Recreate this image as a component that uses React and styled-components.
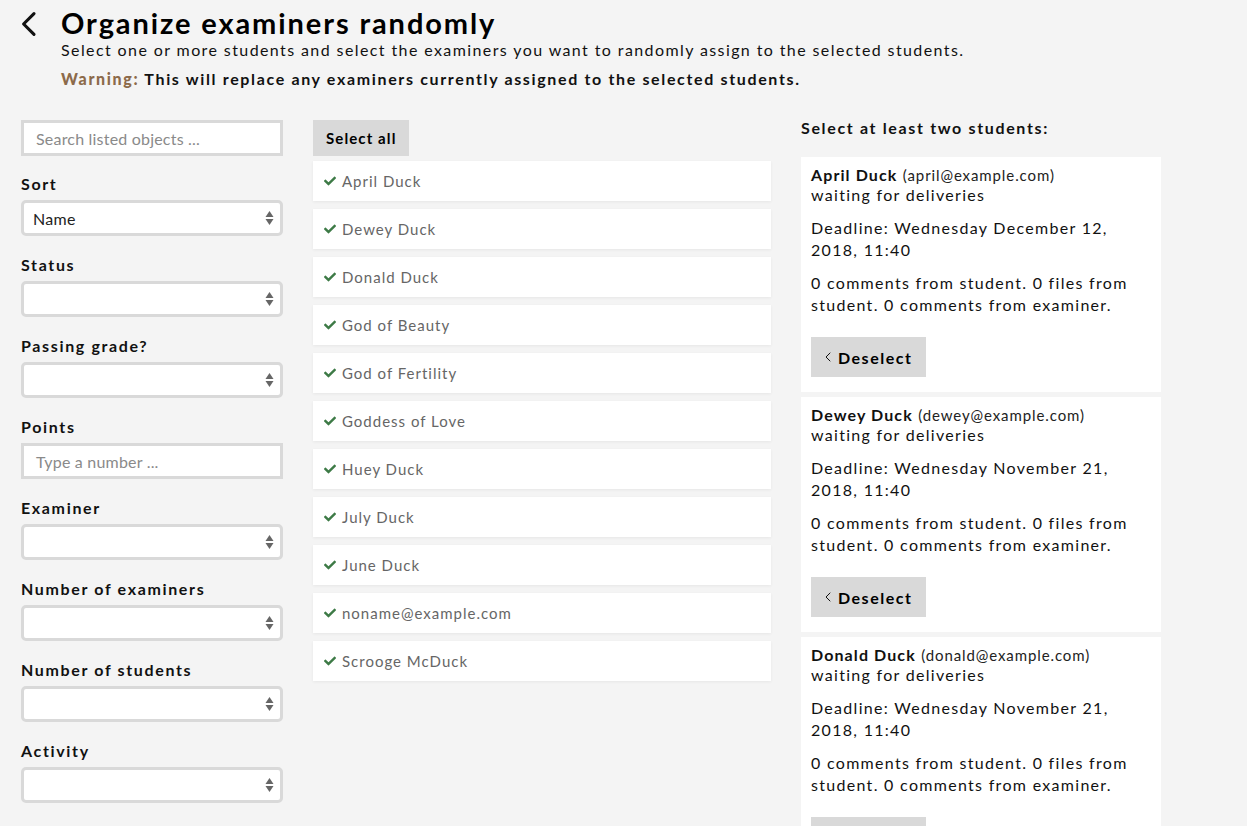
import React from 'react';
import styled, { createGlobalStyle } from 'styled-components';
import { FaCheck } from 'react-icons/fa';

const GlobalStyle = createGlobalStyle`
  html, body {
    margin: 0;
    padding: 0;
    background: #f4f4f4;
  }
  body {
    font-family: Lato, 'Open Sans', sans-serif;
    color: #111;
  }
  * {
    box-sizing: border-box;
  }
`;

const Page = styled.div`
  padding: 0 0 0 21px;
  min-height: 826px;
`;

const Header = styled.div`
  display: flex;
  align-items: flex-start;
  padding-top: 6px;
`;

const BackButton = styled.div`
  width: 40px;
  height: 34px;
  display: flex;
  align-items: center;
  padding-top: 2px;
  svg {
    display: block;
  }
`;

const TitleBlock = styled.div`
  display: flex;
  flex-direction: column;
`;

const Title = styled.h1`
  margin: 0;
  font-size: 29px;
  line-height: 34px;
  font-weight: 700;
  letter-spacing: 1.9px;
  color: #000;
`;

const Lead = styled.p`
  margin: 0;
  font-size: 16px;
  line-height: 20px;
  letter-spacing: 1.4px;
  color: #111;
`;

const Warning = styled.p`
  margin: 9px 0 0;
  font-size: 16px;
  line-height: 20px;
  font-weight: 700;
  letter-spacing: 1.65px;
  color: #111;
  strong {
    color: #8c6a4a;
  }
`;

const Columns = styled.div`
  display: flex;
  align-items: flex-start;
  gap: 30px;
  margin-top: 31px;
`;

const Sidebar = styled.div`
  width: 262px;
  display: flex;
  flex-direction: column;
`;

const TextInput = styled.div`
  height: 36px;
  border: 3px solid #d9d9d9;
  background: #fff;
  display: flex;
  align-items: center;
  padding: 0 12px;
  font-size: 16px;
  letter-spacing: 0.2px;
  color: #8a8a8a;
`;

const FieldLabel = styled.div`
  margin-top: ${p => (p.$first ? 18 : 19)}px;
  margin-bottom: 6px;
  font-size: 16px;
  line-height: 20px;
  font-weight: 700;
  letter-spacing: 1.65px;
  color: #111;
`;

const SelectBox = styled.div`
  height: 36px;
  border: 3px solid #d9d9d9;
  border-radius: 5px;
  background: #fff;
  display: flex;
  align-items: center;
  justify-content: space-between;
  padding: 0 6px 0 9px;
  font-size: 16px;
  letter-spacing: 0.3px;
  color: #222;
`;

const Arrows = styled.svg`
  display: block;
`;

const ListColumn = styled.div`
  width: 458px;
  display: flex;
  flex-direction: column;
  gap: 8px;
`;

const GrayButton = styled.div`
  display: inline-flex;
  align-items: center;
  align-self: flex-start;
  gap: 7px;
  height: ${p => p.$h}px;
  padding: 0 ${p => p.$px}px;
  background: #d9d9d9;
  font-size: ${p => p.$fs}px;
  font-weight: 700;
  letter-spacing: ${p => p.$ls}px;
  color: #000;
`;

const ListStack = styled.div`
  display: flex;
  flex-direction: column;
  gap: 8px;
  margin-top: -3px;
`;

const ListItem = styled.div`
  height: 40px;
  background: #fff;
  box-shadow: 0 1px 3px rgba(0, 0, 0, 0.06);
  display: flex;
  align-items: center;
  gap: 6px;
  padding: 0 11px;
  font-size: 15px;
  letter-spacing: 1px;
  color: #666;
  svg {
    color: #3d7a46;
    flex: none;
  }
`;

const DetailColumn = styled.div`
  width: 360px;
  display: flex;
  flex-direction: column;
`;

const DetailHeading = styled.div`
  height: 37px;
  font-size: 16px;
  line-height: 16px;
  font-weight: 700;
  letter-spacing: 1.65px;
  color: #111;
`;

const CardStack = styled.div`
  display: flex;
  flex-direction: column;
  gap: 5px;
`;

const Card = styled.div`
  background: #fff;
  padding: 8px 10px 15px;
  color: #111;
`;

const CardHead = styled.div`
  font-size: 16px;
  line-height: 20px;
  letter-spacing: 1.3px;
  b {
    font-weight: 700;
    letter-spacing: 1.1px;
  }
  span {
    font-size: 15px;
    letter-spacing: 0.9px;
    color: #222;
  }
`;

const CardText = styled.p`
  margin: ${p => p.$mt}px 0 0;
  font-size: 16px;
  line-height: 22px;
  letter-spacing: 1.3px;
  color: #111;
`;

const ButtonRow = styled.div`
  margin-top: 21px;
  display: flex;
`;

const filters = [
  { label: 'Sort', value: 'Name' },
  { label: 'Status' },
  { label: 'Passing grade?' },
  { label: 'Points', input: 'Type a number ...' },
  { label: 'Examiner' },
  { label: 'Number of examiners' },
  { label: 'Number of students' },
  { label: 'Activity' },
];

const students = [
  'April Duck',
  'Dewey Duck',
  'Donald Duck',
  'God of Beauty',
  'God of Fertility',
  'Goddess of Love',
  'Huey Duck',
  'July Duck',
  'June Duck',
  'noname@example.com',
  'Scrooge McDuck',
];

const selected = [
  { name: 'April Duck', email: 'april@example.com', deadline: 'Wednesday December 12, 2018, 11:40' },
  { name: 'Dewey Duck', email: 'dewey@example.com', deadline: 'Wednesday November 21, 2018, 11:40' },
  { name: 'Donald Duck', email: 'donald@example.com', deadline: 'Wednesday November 21, 2018, 11:40' },
];

function SelectArrows() {
  return (
    <Arrows width="9" height="16" viewBox="0 0 9 16">
      <path d="M4.5 1 L8.5 7 L0.5 7 Z" fill="#666" />
      <path d="M4.5 15 L8.5 9 L0.5 9 Z" fill="#666" />
    </Arrows>
  );
}

function Chevron({ size = 20, stroke = 3 }) {
  return (
    <svg width={size * 0.6} height={size} viewBox="0 0 12 20" fill="none">
      <path d="M10 2 L2 10 L10 18" stroke="#111" strokeWidth={stroke} strokeLinecap="round" strokeLinejoin="round" />
    </svg>
  );
}

export default function App() {
  return (
    <Page>
      <GlobalStyle />
      <Header>
        <BackButton>
          <Chevron size={26} stroke={2.4} />
        </BackButton>
        <TitleBlock>
          <Title>Organize examiners randomly</Title>
          <Lead>
            Select one or more students and select the examiners you want to randomly assign to the selected students.
          </Lead>
          <Warning>
            <strong>Warning:</strong> This will replace any examiners currently assigned to the selected students.
          </Warning>
        </TitleBlock>
      </Header>

      <Columns>
        <Sidebar>
          <TextInput>Search listed objects ...</TextInput>
          {filters.map((f, i) => (
            <React.Fragment key={f.label}>
              <FieldLabel $first={i === 0}>{f.label}</FieldLabel>
              {f.input ? (
                <TextInput>{f.input}</TextInput>
              ) : (
                <SelectBox>
                  <span>{f.value || ''}</span>
                  <SelectArrows />
                </SelectBox>
              )}
            </React.Fragment>
          ))}
        </Sidebar>

        <ListColumn>
          <GrayButton $h={36} $px={13} $fs={15} $ls={1.1}>
            Select all
          </GrayButton>
          <ListStack>
            {students.map(name => (
              <ListItem key={name}>
                <FaCheck size={12} />
                {name}
              </ListItem>
            ))}
          </ListStack>
        </ListColumn>

        <DetailColumn>
          <DetailHeading>Select at least two students:</DetailHeading>
          <CardStack>
            {selected.map(s => (
              <Card key={s.name}>
                <CardHead>
                  <b>{s.name}</b> <span>({s.email})</span>
                  <br />
                  waiting for deliveries
                </CardHead>
                <CardText $mt={12}>Deadline: {s.deadline}</CardText>
                <CardText $mt={11}>0 comments from student. 0 files from student. 0 comments from examiner.</CardText>
                <ButtonRow>
                  <GrayButton $h={40} $px={14} $fs={16} $ls={1.5}>
                    <Chevron size={10} stroke={2} />
                    Deselect
                  </GrayButton>
                </ButtonRow>
              </Card>
            ))}
          </CardStack>
        </DetailColumn>
      </Columns>
    </Page>
  );
}
